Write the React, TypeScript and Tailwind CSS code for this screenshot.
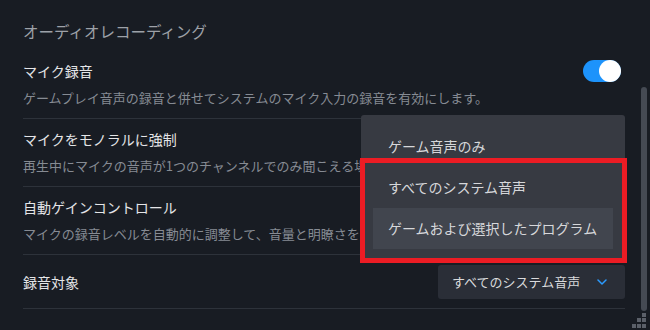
import React from "react";

function Toggle() {
  return (
    <div className="relative w-[38px] h-[22px] rounded-full bg-[#1d93fb] mr-1 shrink-0">
      <div className="absolute right-0 top-0 w-[22px] h-[22px] rounded-full bg-white" />
    </div>
  );
}

export default function App() {
  return (
    <div className="relative w-[650px] h-[330px] overflow-hidden bg-[#181c23] font-['Noto_Sans_CJK_JP','Noto_Sans',sans-serif]">
      <div className="pl-[23px] w-[625px]">
        <div className="pt-5 pb-[9px] text-[15.5px] leading-[22px] text-[#9da1a8]">
          オーディオレコーディング
        </div>

        <div className="pt-[10px] pb-[11px] border-b border-[#2d323a]">
          <div className="flex items-center justify-between h-5">
            <div className="text-[14px] leading-5 text-[#e4e5e7]">マイク録音</div>
            <Toggle />
          </div>
          <div className="mt-2 text-[13px] leading-[18px] text-[#868b93] whitespace-nowrap overflow-hidden">
            ゲームプレイ音声の録音と併せてシステムのマイク入力の録音を有効にします。
          </div>
        </div>

        <div className="pt-[10px] pb-[11px] border-b border-[#2d323a]">
          <div className="text-[14px] leading-5 text-[#e4e5e7]">マイクをモノラルに強制</div>
          <div className="mt-2 text-[13px] leading-[18px] text-[#868b93] whitespace-nowrap overflow-hidden">
            再生中にマイクの音声が1つのチャンネルでのみ聞こえる場合は、これを有効にします。
          </div>
        </div>

        <div className="pt-[10px] pb-[11px] border-b border-[#2d323a]">
          <div className="text-[14px] leading-5 text-[#e4e5e7]">自動ゲインコントロール</div>
          <div className="mt-2 text-[13px] leading-[18px] text-[#868b93] whitespace-nowrap overflow-hidden">
            マイクの録音レベルを自動的に調整して、音量と明瞭さを向上させます。
          </div>
        </div>

        <div className="flex items-center justify-between pt-[10px] pb-[9px] border-b border-[#2d323a]">
          <div className="text-[14px] leading-5 text-[#e4e5e7]">録音対象</div>
          <div className="flex items-center justify-between w-[187px] h-[34px] rounded-[3px] bg-[#2a2e37] pl-[14px] pr-[18px]">
            <span className="text-[13px] leading-5 text-[#d9dadc]">すべてのシステム音声</span>
            <svg width="10" height="6" viewBox="0 0 10 6" fill="none">
              <path d="M1 1 L5 5 L9 1" stroke="#2b9bff" strokeWidth="1.5" strokeLinecap="round" strokeLinejoin="round" />
            </svg>
          </div>
        </div>
      </div>

      {/* dropdown menu */}
      <div className="absolute left-[361px] top-[115px] w-[264px] h-[147px] rounded-[3px] bg-[#373a42] pt-[11px] px-3">
        <div className="h-[41px] flex items-center pl-[15px] text-[14px] text-[#d6d7da]">ゲーム音声のみ</div>
        <div className="h-[41px] flex items-center pl-[15px] text-[14px] text-[#d6d7da]">すべてのシステム音声</div>
        <div className="h-[41px] flex items-center pl-[15px] text-[14px] text-[#d6d7da] bg-[#41454e]">ゲームおよび選択したプログラム</div>
      </div>

      {/* red annotation */}
      <div className="absolute left-[360px] top-[158px] w-[267px] h-[105px] border-[5px] border-[#ec1c24]" />

      {/* scrollbar */}
      <div className="absolute left-[641px] top-[87px] w-[6px] h-[224px] rounded-full bg-[#454a53]" />

      {/* resize grip */}
      <svg className="absolute left-[630px] top-[311px]" width="20" height="19" viewBox="0 0 20 19">
        <rect x="12" y="2" width="4" height="4" fill="#5b6069" />
        <rect x="7" y="7" width="4" height="4" fill="#5b6069" />
        <rect x="12" y="7" width="4" height="4" fill="#5b6069" />
        <rect x="2" y="13" width="4" height="4" fill="#5b6069" />
        <rect x="7" y="13" width="4" height="4" fill="#5b6069" />
        <rect x="12" y="13" width="4" height="4" fill="#5b6069" />
      </svg>
    </div>
  );
}
